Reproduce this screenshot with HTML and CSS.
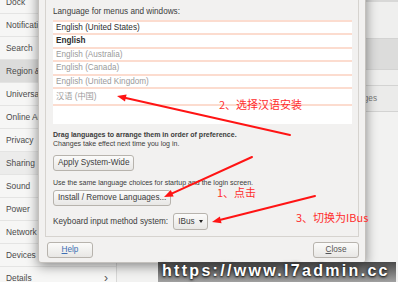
FILE: index.html
```html
<!DOCTYPE html>
<html lang="en">
<head>
    <meta charset="UTF-8">
    <meta name="viewport" content="width=device-width, initial-scale=1.0">
    <title>Region &amp; Language</title>
    <link rel="stylesheet" href="styles.css">
</head>
<body>
    <div class="screen">
        <div class="settings">
            <div class="sidebar">
                <div class="nav">
                    <div class="nav-item">Dock</div>
                    <div class="nav-item">Notifications</div>
                    <div class="nav-item">Search</div>
                    <div class="nav-item active">Region &amp; Language</div>
                    <div class="nav-item">Universal Access</div>
                    <div class="nav-item">Online Accounts</div>
                    <div class="nav-item">Privacy</div>
                    <div class="nav-item hover">Sharing</div>
                    <div class="nav-item">Sound</div>
                    <div class="nav-item">Power</div>
                    <div class="nav-item">Network</div>
                    <div class="nav-item">Devices</div>
                    <div class="nav-item">Details <span class="chevron">&rsaquo;</span></div>
                </div>
            </div>
            <div class="panel">
                <div class="panel-row top"></div>
                <div class="panel-row dark"></div>
                <div class="panel-row thin"></div>
                <div class="panel-row label">Manage Installed Languages</div>
            </div>
        </div>

        <div class="dialog">
            <div class="frame">
                <div class="caption">Language for menus and windows:</div>
                <div class="lang-list">
                    <div class="lang">English (United States)</div>
                    <div class="lang current">English</div>
                    <div class="lang muted">English (Australia)</div>
                    <div class="lang muted">English (Canada)</div>
                    <div class="lang muted">English (United Kingdom)</div>
                    <div class="lang muted cjk">汉语 (中国)</div>
                    <div class="lang empty"></div>
                </div>
                <div class="hint strong">Drag languages to arrange them in order of preference.</div>
                <div class="hint">Changes take effect next time you log in.</div>
                <div class="row-apply">
                    <button class="button">Apply System-Wide</button>
                </div>
                <div class="hint spaced">Use the same language choices for startup and the login screen.</div>
                <div class="row-install">
                    <button class="button">Install / Remove Languages...</button>
                </div>
                <div class="row-input">
                    <span>Keyboard input method system:</span>
                    <div class="combo"><span>IBus</span><span class="caret"></span></div>
                </div>
            </div>
            <div class="footer">
                <button class="button wide help"><u>H</u>elp</button>
                <button class="button wide close"><u>C</u>lose</button>
            </div>
        </div>

        <svg class="marks" width="398" height="282" viewBox="0 0 398 282">
            <g stroke="#ff1414" stroke-width="2" stroke-linecap="round" fill="#ff1414">
                <line x1="290" y1="135" x2="125.8" y2="98"/>
                <polygon points="117,96 126.6,94.6 125,101.4" stroke="none"/>
                <line x1="252" y1="157" x2="172.2" y2="193.3"/>
                <polygon points="164,197 170.8,190.1 173.7,196.5" stroke="none"/>
                <line x1="315" y1="196" x2="220.7" y2="219.8"/>
                <polygon points="212,222 219.9,216.4 221.6,223.2" stroke="none"/>
            </g>
        </svg>
        <span class="note note-two">2、选择汉语安装</span>
        <span class="note note-one">1、点击</span>
        <span class="note note-three">3、切换为IBus</span>

        <div class="watermark">https://www.l7admin.cc</div>
    </div>
</body>
</html>
```

FILE: styles.css
```css
body {
    margin: 0;
    font-family: "Liberation Sans", Arial, sans-serif;
}
.screen {
    position: relative;
    width: 398px;
    height: 282px;
    overflow: hidden;
    background: #f1f1f0;
}
.settings {
    display: flex;
    height: 100%;
}
.sidebar {
    width: 116px;
    flex: none;
    background: #f6f6f5;
    border-right: 1px solid #d8d8d7;
    overflow: hidden;
}
.nav {
    margin-top: -9px;
}
.nav-item {
    height: 22px;
    line-height: 22px;
    border-bottom: 1px solid #e4e4e3;
    padding: 0 8px 0 6px;
    font-size: 8.4px;
    color: #4a4a4a;
    white-space: nowrap;
    display: flex;
    justify-content: space-between;
}
.nav-item.active {
    background: #dcdcdb;
}
.nav-item.hover {
    background: #ececeb;
}
.chevron {
    font-size: 12px;
    color: #555;
}
.panel {
    flex: 1;
    background: #f2f2f1;
}
.panel-row {
    border-bottom: 1px solid #d3d3d2;
}
.panel-row.top {
    height: 36px;
    background: #efefee;
    border-top: 2px solid #d8d8d7;
}
.panel-row.dark {
    height: 30px;
    background: #dcdcdb;
}
.panel-row.thin {
    height: 15px;
    background: #eeeeed;
}
.panel-row.label {
    height: 25px;
    line-height: 25px;
    background: #ebebea;
    font-size: 8.2px;
    color: #777;
    text-align: right;
    padding-right: 21px;
    white-space: nowrap;
    overflow: hidden;
}

.dialog {
    position: absolute;
    left: 38px;
    top: -20px;
    width: 328px;
    height: 283px;
    box-sizing: border-box;
    padding: 10px 6px 4px;
    background: #f2f1f0;
    border: 1px solid #c4c1bd;
    border-radius: 0 0 3px 3px;
    box-shadow: 0 3px 12px rgba(0, 0, 0, 0.45);
    display: flex;
    flex-direction: column;
    color: #3c3c3c;
    font-size: 8.2px;
}
.frame {
    flex: 1;
    border: 1px solid #d6d3cf;
    padding: 0 6px 0 7px;
    display: flex;
    flex-direction: column;
}
.caption {
    margin-top: 14px;
    line-height: 12px;
}
.lang-list {
    margin-top: 2px;
    background: #fff;
}
.lang {
    box-sizing: border-box;
    height: 13.4px;
    line-height: 11.4px;
    border-top: 2px solid #fcdccf;
    padding-left: 3px;
    color: #2e2e2e;
    white-space: nowrap;
}
.lang.current {
    font-weight: bold;
}
.lang.muted {
    color: #9b9b9b;
}
.lang.cjk {
    height: 17px;
    line-height: 15px;
    font-family: "Liberation Sans", "Noto Sans CJK SC", sans-serif;
}
.lang.empty {
    height: 20px;
}
.hint {
    font-size: 7px;
    line-height: 9px;
    white-space: nowrap;
}
.hint.strong {
    font-weight: bold;
    margin-top: 6.5px;
}
.hint.spaced {
    margin-top: 7.5px;
}
.row-apply {
    margin-top: 6.5px;
}
.row-install {
    margin-top: 2.5px;
}
.button {
    height: 16px;
    padding: 0 4px;
    border: 1px solid #b7b3ad;
    border-radius: 3px;
    background: linear-gradient(to bottom, #fbfbfa, #e8e7e5);
    font-family: inherit;
    font-size: 8.2px;
    color: #3c3c3c;
    line-height: 14px;
}
.row-input {
    margin-top: 7.5px;
    display: flex;
    align-items: center;
    gap: 5px;
}
.combo {
    box-sizing: border-box;
    width: 35px;
    height: 17px;
    padding: 0 4px;
    border: 1px solid #b7b3ad;
    border-radius: 3px;
    background: linear-gradient(to bottom, #fbfbfa, #e8e7e5);
    display: flex;
    align-items: center;
    justify-content: space-between;
}
.caret {
    width: 0;
    height: 0;
    border-left: 2.5px solid transparent;
    border-right: 2.5px solid transparent;
    border-top: 3px solid #222;
}
.footer {
    margin-top: 5px;
    padding-left: 2px;
    display: flex;
    justify-content: space-between;
}
.button.wide {
    width: 46px;
}
.help {
    color: #3d6fb3;
}
.close {
    color: #555;
}

.marks {
    position: absolute;
    left: 0;
    top: 0;
}
.note {
    position: absolute;
    font-family: "Noto Sans CJK SC", "Liberation Sans", sans-serif;
    font-size: 11px;
    line-height: 14px;
    color: #ff2d2d;
    white-space: nowrap;
}
.note-two {
    left: 219px;
    top: 97px;
}
.note-one {
    left: 217px;
    top: 185px;
}
.note-three {
    left: 296px;
    top: 210px;
}
.watermark {
    position: absolute;
    left: 158px;
    top: 262px;
    height: 20px;
    padding: 0 6px 0 4px;
    line-height: 18px;
    font-size: 16px;
    font-weight: bold;
    letter-spacing: 2.3px;
    color: #fff;
    white-space: nowrap;
    background: linear-gradient(to bottom, rgba(45, 45, 45, 0.85), rgba(95, 95, 95, 0.55));
    text-shadow: 0 1px 2px #111, 0 0 4px #222;
}
```
